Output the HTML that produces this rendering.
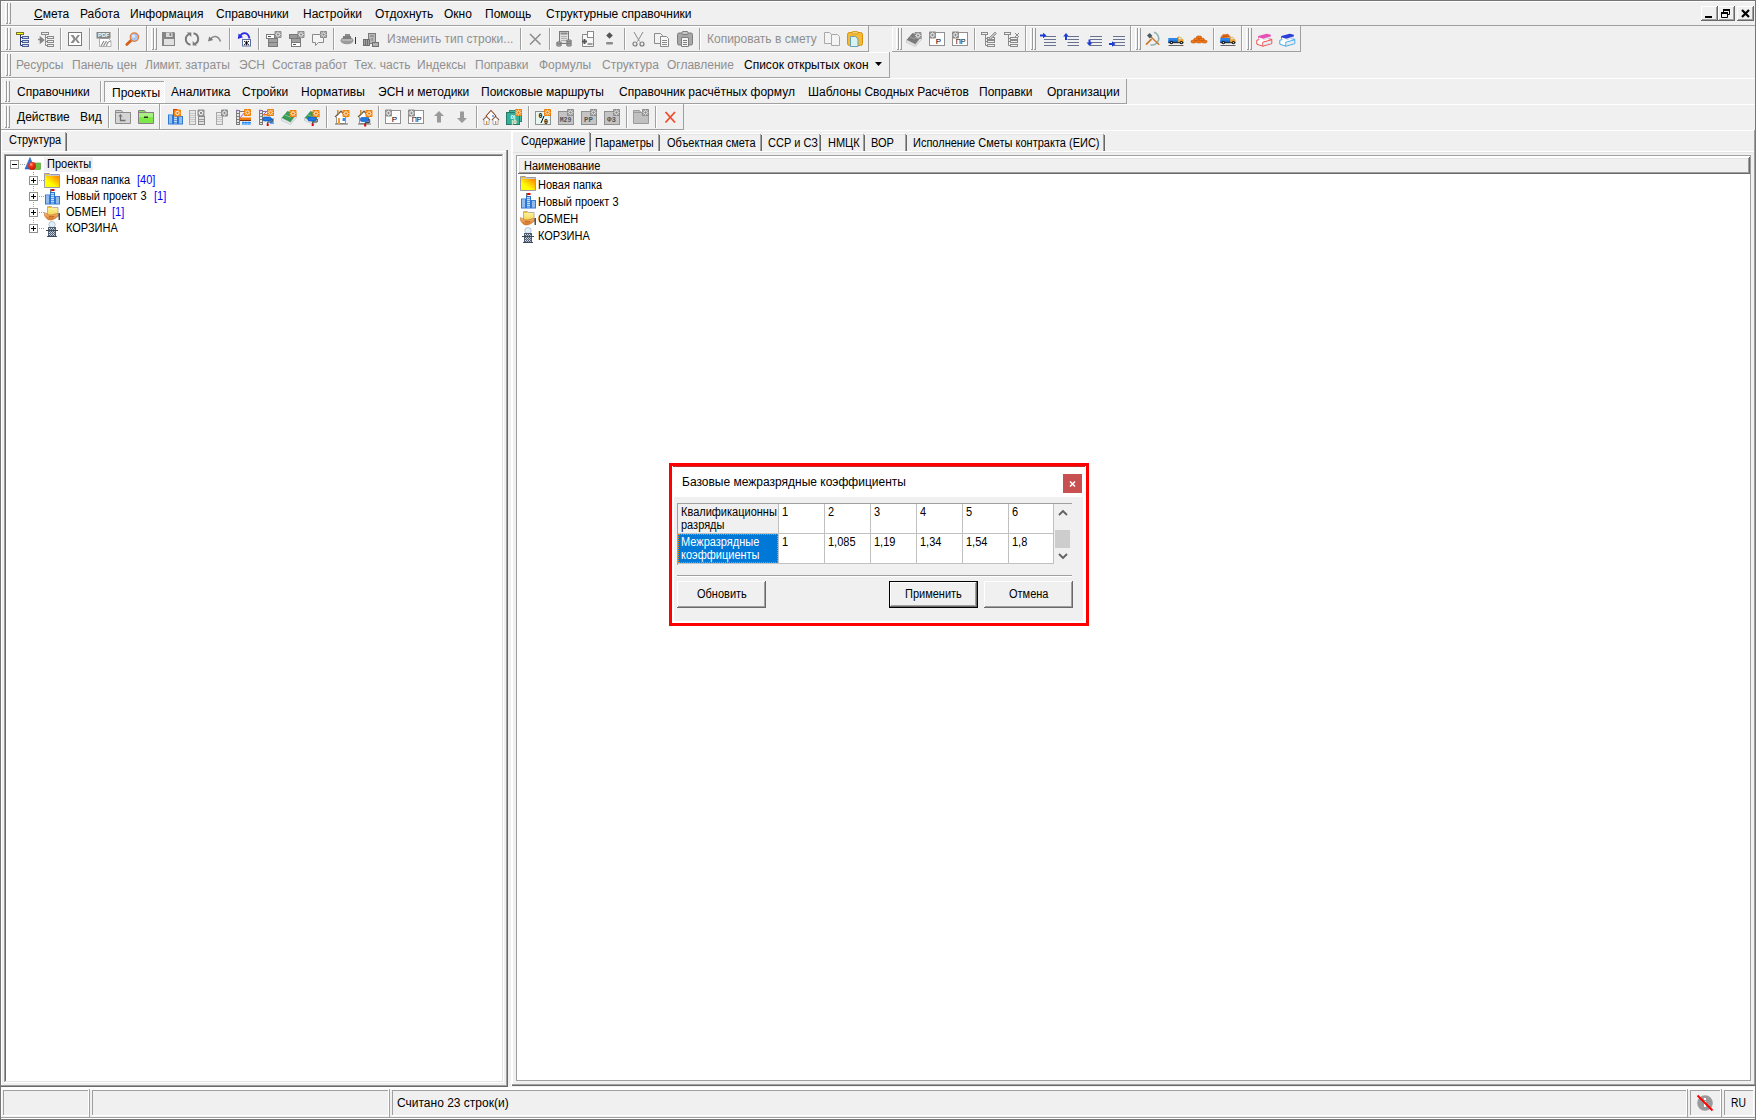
<!DOCTYPE html><html><head><meta charset="utf-8"><style>
*{margin:0;padding:0;box-sizing:border-box}
html,body{width:1756px;height:1120px;overflow:hidden;background:#f0f0f0}
body{position:relative;font-family:"Liberation Sans",sans-serif}
div,span,svg{position:absolute}
span{white-space:pre;line-height:15px}
.t{font-size:12px;transform:scaleX(0.917);transform-origin:0 0}
u{text-decoration:underline}
</style></head><body><div style="left:0px;top:0px;width:1756px;height:1120px;background:#f0f0f0;"></div><div style="left:0px;top:0px;width:1756px;height:1px;background:#767676;"></div><div style="left:0px;top:0px;width:1px;height:1120px;background:#767676;"></div><div style="left:1755px;top:0px;width:1px;height:1120px;background:#767676;"></div><div style="left:1px;top:1px;width:1754px;height:1px;background:#fff;"></div><div style="left:1px;top:1px;width:1px;height:1119px;background:#fff;"></div><div style="left:5px;top:3px;width:1px;height:21px;background:#fff;"></div><div style="left:7px;top:3px;width:1px;height:21px;background:#9a9a9a;"></div><div style="left:6px;top:23px;width:1px;height:1px;background:#9a9a9a;"></div><div style="left:8px;top:3px;width:1px;height:21px;background:#fff;"></div><div style="left:10px;top:3px;width:1px;height:21px;background:#9a9a9a;"></div><div style="left:9px;top:23px;width:1px;height:1px;background:#9a9a9a;"></div><div style="left:1px;top:25px;width:1754px;height:1px;background:#a0a0a0;"></div><span style="left:34px;top:7px;font-size:12px;color:#000;"><u>С</u>мета</span><span style="left:80px;top:7px;font-size:12px;color:#000;">Работа</span><span style="left:130px;top:7px;font-size:12px;color:#000;">Информация</span><span style="left:216px;top:7px;font-size:12px;color:#000;">Справочники</span><span style="left:303px;top:7px;font-size:12px;color:#000;">Настройки</span><span style="left:375px;top:7px;font-size:12px;color:#000;">Отдохнуть</span><span style="left:444px;top:7px;font-size:12px;color:#000;">Окно</span><span style="left:485px;top:7px;font-size:12px;color:#000;">Помощь</span><span style="left:546px;top:7px;font-size:12px;color:#000;">Структурные справочники</span><div style="left:1701px;top:6px;width:17px;height:15px;background:#f0f0f0;"></div><div style="left:1701px;top:6px;width:17px;height:1px;background:#fff;"></div><div style="left:1701px;top:6px;width:1px;height:15px;background:#fff;"></div><div style="left:1701px;top:20px;width:17px;height:1px;background:#696969;"></div><div style="left:1717px;top:6px;width:1px;height:15px;background:#696969;"></div><div style="left:1702px;top:19px;width:15px;height:1px;background:#a0a0a0;"></div><div style="left:1716px;top:7px;width:1px;height:13px;background:#a0a0a0;"></div><div style="left:1705px;top:16px;width:7px;height:2px;background:#000"></div><div style="left:1718px;top:6px;width:17px;height:15px;background:#f0f0f0;"></div><div style="left:1718px;top:6px;width:17px;height:1px;background:#fff;"></div><div style="left:1718px;top:6px;width:1px;height:15px;background:#fff;"></div><div style="left:1718px;top:20px;width:17px;height:1px;background:#696969;"></div><div style="left:1734px;top:6px;width:1px;height:15px;background:#696969;"></div><div style="left:1719px;top:19px;width:15px;height:1px;background:#a0a0a0;"></div><div style="left:1733px;top:7px;width:1px;height:13px;background:#a0a0a0;"></div><svg style="left:1721px;top:9px" width="10" height="10"><path d="M2.5 0.5h6v5h-6z" fill="#f0f0f0" stroke="#000" stroke-width="1"/><path d="M2 1h7" stroke="#000" stroke-width="2"/><path d="M0.5 3.5h6v5h-6z" fill="#f0f0f0" stroke="#000" stroke-width="1"/><path d="M0 4h7" stroke="#000" stroke-width="2"/></svg><div style="left:1737px;top:6px;width:17px;height:15px;background:#f0f0f0;"></div><div style="left:1737px;top:6px;width:17px;height:1px;background:#fff;"></div><div style="left:1737px;top:6px;width:1px;height:15px;background:#fff;"></div><div style="left:1737px;top:20px;width:17px;height:1px;background:#696969;"></div><div style="left:1753px;top:6px;width:1px;height:15px;background:#696969;"></div><div style="left:1738px;top:19px;width:15px;height:1px;background:#a0a0a0;"></div><div style="left:1752px;top:7px;width:1px;height:13px;background:#a0a0a0;"></div><svg style="left:1741px;top:9px" width="9" height="9"><path d="M1 1L8 8M8 1L1 8" stroke="#000" stroke-width="2.2"/></svg><div style="left:1px;top:26px;width:146px;height:1px;background:#fff;"></div><div style="left:1px;top:26px;width:1px;height:26px;background:#fff;"></div><div style="left:1px;top:51px;width:146px;height:1px;background:#a0a0a0;"></div><div style="left:146px;top:26px;width:1px;height:26px;background:#a0a0a0;"></div><div style="left:5px;top:28px;width:1px;height:22px;background:#fff;"></div><div style="left:7px;top:28px;width:1px;height:22px;background:#9a9a9a;"></div><div style="left:6px;top:49px;width:1px;height:1px;background:#9a9a9a;"></div><div style="left:8px;top:28px;width:1px;height:22px;background:#fff;"></div><div style="left:10px;top:28px;width:1px;height:22px;background:#9a9a9a;"></div><div style="left:9px;top:49px;width:1px;height:1px;background:#9a9a9a;"></div><div style="left:147px;top:26px;width:722px;height:1px;background:#fff;"></div><div style="left:147px;top:26px;width:1px;height:26px;background:#fff;"></div><div style="left:147px;top:51px;width:722px;height:1px;background:#a0a0a0;"></div><div style="left:868px;top:26px;width:1px;height:26px;background:#a0a0a0;"></div><div style="left:151px;top:28px;width:1px;height:22px;background:#fff;"></div><div style="left:153px;top:28px;width:1px;height:22px;background:#9a9a9a;"></div><div style="left:152px;top:49px;width:1px;height:1px;background:#9a9a9a;"></div><div style="left:154px;top:28px;width:1px;height:22px;background:#fff;"></div><div style="left:156px;top:28px;width:1px;height:22px;background:#9a9a9a;"></div><div style="left:155px;top:49px;width:1px;height:1px;background:#9a9a9a;"></div><div style="left:892px;top:26px;width:134px;height:1px;background:#fff;"></div><div style="left:892px;top:26px;width:1px;height:26px;background:#fff;"></div><div style="left:892px;top:51px;width:134px;height:1px;background:#a0a0a0;"></div><div style="left:1025px;top:26px;width:1px;height:26px;background:#a0a0a0;"></div><div style="left:896px;top:28px;width:1px;height:22px;background:#fff;"></div><div style="left:898px;top:28px;width:1px;height:22px;background:#9a9a9a;"></div><div style="left:897px;top:49px;width:1px;height:1px;background:#9a9a9a;"></div><div style="left:899px;top:28px;width:1px;height:22px;background:#fff;"></div><div style="left:901px;top:28px;width:1px;height:22px;background:#9a9a9a;"></div><div style="left:900px;top:49px;width:1px;height:1px;background:#9a9a9a;"></div><div style="left:1026px;top:26px;width:105px;height:1px;background:#fff;"></div><div style="left:1026px;top:26px;width:1px;height:26px;background:#fff;"></div><div style="left:1026px;top:51px;width:105px;height:1px;background:#a0a0a0;"></div><div style="left:1130px;top:26px;width:1px;height:26px;background:#a0a0a0;"></div><div style="left:1030px;top:28px;width:1px;height:22px;background:#fff;"></div><div style="left:1032px;top:28px;width:1px;height:22px;background:#9a9a9a;"></div><div style="left:1031px;top:49px;width:1px;height:1px;background:#9a9a9a;"></div><div style="left:1033px;top:28px;width:1px;height:22px;background:#fff;"></div><div style="left:1035px;top:28px;width:1px;height:22px;background:#9a9a9a;"></div><div style="left:1034px;top:49px;width:1px;height:1px;background:#9a9a9a;"></div><div style="left:1131px;top:26px;width:111px;height:1px;background:#fff;"></div><div style="left:1131px;top:26px;width:1px;height:26px;background:#fff;"></div><div style="left:1131px;top:51px;width:111px;height:1px;background:#a0a0a0;"></div><div style="left:1241px;top:26px;width:1px;height:26px;background:#a0a0a0;"></div><div style="left:1135px;top:28px;width:1px;height:22px;background:#fff;"></div><div style="left:1137px;top:28px;width:1px;height:22px;background:#9a9a9a;"></div><div style="left:1136px;top:49px;width:1px;height:1px;background:#9a9a9a;"></div><div style="left:1138px;top:28px;width:1px;height:22px;background:#fff;"></div><div style="left:1140px;top:28px;width:1px;height:22px;background:#9a9a9a;"></div><div style="left:1139px;top:49px;width:1px;height:1px;background:#9a9a9a;"></div><div style="left:1242px;top:26px;width:59px;height:1px;background:#fff;"></div><div style="left:1242px;top:26px;width:1px;height:26px;background:#fff;"></div><div style="left:1242px;top:51px;width:59px;height:1px;background:#a0a0a0;"></div><div style="left:1300px;top:26px;width:1px;height:26px;background:#a0a0a0;"></div><div style="left:1246px;top:28px;width:1px;height:22px;background:#fff;"></div><div style="left:1248px;top:28px;width:1px;height:22px;background:#9a9a9a;"></div><div style="left:1247px;top:49px;width:1px;height:1px;background:#9a9a9a;"></div><div style="left:1249px;top:28px;width:1px;height:22px;background:#fff;"></div><div style="left:1251px;top:28px;width:1px;height:22px;background:#9a9a9a;"></div><div style="left:1250px;top:49px;width:1px;height:1px;background:#9a9a9a;"></div><div style="left:60px;top:28px;width:1px;height:22px;background:#a0a0a0;"></div><div style="left:61px;top:28px;width:1px;height:22px;background:#fff;"></div><div style="left:89px;top:28px;width:1px;height:22px;background:#a0a0a0;"></div><div style="left:90px;top:28px;width:1px;height:22px;background:#fff;"></div><div style="left:118px;top:28px;width:1px;height:22px;background:#a0a0a0;"></div><div style="left:119px;top:28px;width:1px;height:22px;background:#fff;"></div><div style="left:229px;top:28px;width:1px;height:22px;background:#a0a0a0;"></div><div style="left:230px;top:28px;width:1px;height:22px;background:#fff;"></div><div style="left:258px;top:28px;width:1px;height:22px;background:#a0a0a0;"></div><div style="left:259px;top:28px;width:1px;height:22px;background:#fff;"></div><div style="left:333px;top:28px;width:1px;height:22px;background:#a0a0a0;"></div><div style="left:334px;top:28px;width:1px;height:22px;background:#fff;"></div><div style="left:520px;top:28px;width:1px;height:22px;background:#a0a0a0;"></div><div style="left:521px;top:28px;width:1px;height:22px;background:#fff;"></div><div style="left:549px;top:28px;width:1px;height:22px;background:#a0a0a0;"></div><div style="left:550px;top:28px;width:1px;height:22px;background:#fff;"></div><div style="left:624px;top:28px;width:1px;height:22px;background:#a0a0a0;"></div><div style="left:625px;top:28px;width:1px;height:22px;background:#fff;"></div><div style="left:699px;top:28px;width:1px;height:22px;background:#a0a0a0;"></div><div style="left:700px;top:28px;width:1px;height:22px;background:#fff;"></div><div style="left:974px;top:28px;width:1px;height:22px;background:#a0a0a0;"></div><div style="left:975px;top:28px;width:1px;height:22px;background:#fff;"></div><div style="left:1213px;top:28px;width:1px;height:22px;background:#a0a0a0;"></div><div style="left:1214px;top:28px;width:1px;height:22px;background:#fff;"></div><span style="left:387px;top:32px;font-size:12px;color:#8f8f8f;">Изменить тип строки...</span><span style="left:707px;top:32px;font-size:12px;color:#8f8f8f;">Копировать в смету</span><div style="left:1px;top:52px;width:889px;height:1px;background:#fff;"></div><div style="left:1px;top:52px;width:1px;height:26px;background:#fff;"></div><div style="left:1px;top:77px;width:889px;height:1px;background:#a0a0a0;"></div><div style="left:889px;top:52px;width:1px;height:26px;background:#a0a0a0;"></div><div style="left:5px;top:54px;width:1px;height:22px;background:#fff;"></div><div style="left:7px;top:54px;width:1px;height:22px;background:#9a9a9a;"></div><div style="left:6px;top:75px;width:1px;height:1px;background:#9a9a9a;"></div><div style="left:8px;top:54px;width:1px;height:22px;background:#fff;"></div><div style="left:10px;top:54px;width:1px;height:22px;background:#9a9a9a;"></div><div style="left:9px;top:75px;width:1px;height:1px;background:#9a9a9a;"></div><span style="left:16px;top:58px;font-size:12px;color:#8f8f8f;">Ресурсы</span><span style="left:72px;top:58px;font-size:12px;color:#8f8f8f;">Панель цен</span><span style="left:145px;top:58px;font-size:12px;color:#8f8f8f;">Лимит. затраты</span><span style="left:239px;top:58px;font-size:12px;color:#8f8f8f;">ЭСН</span><span style="left:272px;top:58px;font-size:12px;color:#8f8f8f;">Состав работ</span><span style="left:354px;top:58px;font-size:12px;color:#8f8f8f;">Тех. часть</span><span style="left:417px;top:58px;font-size:12px;color:#8f8f8f;">Индексы</span><span style="left:475px;top:58px;font-size:12px;color:#8f8f8f;">Поправки</span><span style="left:539px;top:58px;font-size:12px;color:#8f8f8f;">Формулы</span><span style="left:602px;top:58px;font-size:12px;color:#8f8f8f;">Структура</span><span style="left:667px;top:58px;font-size:12px;color:#8f8f8f;">Оглавление</span><span style="left:744px;top:58px;font-size:12px;color:#000;">Список открытых окон</span><svg style="left:875px;top:62px" width="8" height="5"><path d="M0 0H7L3.5 4Z" fill="#000"/></svg><div style="left:1px;top:78px;width:1754px;height:1px;background:#fff;"></div><div style="left:1px;top:103px;width:1126px;height:1px;background:#a0a0a0;"></div><div style="left:1126px;top:79px;width:1px;height:25px;background:#a0a0a0;"></div><div style="left:4px;top:81px;width:1px;height:21px;background:#fff;"></div><div style="left:6px;top:81px;width:1px;height:21px;background:#9a9a9a;"></div><div style="left:5px;top:101px;width:1px;height:1px;background:#9a9a9a;"></div><div style="left:7px;top:81px;width:1px;height:21px;background:#fff;"></div><div style="left:9px;top:81px;width:1px;height:21px;background:#9a9a9a;"></div><div style="left:8px;top:101px;width:1px;height:1px;background:#9a9a9a;"></div><div style="left:100px;top:81px;width:1px;height:21px;background:#a0a0a0;"></div><div style="left:101px;top:81px;width:1px;height:21px;background:#fff;"></div><div style="left:104px;top:81px;width:61px;height:21px;background-color:#f0f0f0;background-image:linear-gradient(45deg,#fff 25%,transparent 25%,transparent 75%,#fff 75%),linear-gradient(45deg,#fff 25%,transparent 25%,transparent 75%,#fff 75%);background-size:2px 2px;background-position:0 0,1px 1px"></div><div style="left:104px;top:81px;width:61px;height:1px;background:#a0a0a0;"></div><div style="left:104px;top:81px;width:1px;height:21px;background:#a0a0a0;"></div><div style="left:104px;top:102px;width:61px;height:1px;background:#fff;"></div><div style="left:164px;top:81px;width:1px;height:22px;background:#fff;"></div><span style="left:17px;top:85px;font-size:12px;color:#000;">Справочники</span><span style="left:112px;top:86px;font-size:12px;color:#000;">Проекты</span><span style="left:171px;top:85px;font-size:12px;color:#000;">Аналитика</span><span style="left:242px;top:85px;font-size:12px;color:#000;">Стройки</span><span style="left:301px;top:85px;font-size:12px;color:#000;">Нормативы</span><span style="left:378px;top:85px;font-size:12px;color:#000;">ЭСН и методики</span><span style="left:481px;top:85px;font-size:12px;color:#000;">Поисковые маршруты</span><span style="left:619px;top:85px;font-size:12px;color:#000;">Справочник расчётных формул</span><span style="left:808px;top:85px;font-size:12px;color:#000;">Шаблоны Сводных Расчётов</span><span style="left:979px;top:85px;font-size:12px;color:#000;">Поправки</span><span style="left:1047px;top:85px;font-size:12px;color:#000;">Организации</span><div style="left:1px;top:104px;width:1754px;height:1px;background:#fff;"></div><div style="left:1px;top:129px;width:683px;height:1px;background:#a0a0a0;"></div><div style="left:159px;top:104px;width:1px;height:26px;background:#a0a0a0;"></div><div style="left:160px;top:105px;width:1px;height:24px;background:#fff;"></div><div style="left:683px;top:104px;width:1px;height:26px;background:#a0a0a0;"></div><div style="left:4px;top:106px;width:1px;height:22px;background:#fff;"></div><div style="left:6px;top:106px;width:1px;height:22px;background:#9a9a9a;"></div><div style="left:5px;top:127px;width:1px;height:1px;background:#9a9a9a;"></div><div style="left:7px;top:106px;width:1px;height:22px;background:#fff;"></div><div style="left:9px;top:106px;width:1px;height:22px;background:#9a9a9a;"></div><div style="left:8px;top:127px;width:1px;height:1px;background:#9a9a9a;"></div><div style="left:108px;top:106px;width:1px;height:22px;background:#a0a0a0;"></div><div style="left:109px;top:106px;width:1px;height:22px;background:#fff;"></div><div style="left:326px;top:106px;width:1px;height:22px;background:#a0a0a0;"></div><div style="left:327px;top:106px;width:1px;height:22px;background:#fff;"></div><div style="left:378px;top:106px;width:1px;height:22px;background:#a0a0a0;"></div><div style="left:379px;top:106px;width:1px;height:22px;background:#fff;"></div><div style="left:476px;top:106px;width:1px;height:22px;background:#a0a0a0;"></div><div style="left:477px;top:106px;width:1px;height:22px;background:#fff;"></div><div style="left:528px;top:106px;width:1px;height:22px;background:#a0a0a0;"></div><div style="left:529px;top:106px;width:1px;height:22px;background:#fff;"></div><div style="left:626px;top:106px;width:1px;height:22px;background:#a0a0a0;"></div><div style="left:627px;top:106px;width:1px;height:22px;background:#fff;"></div><div style="left:655px;top:106px;width:1px;height:22px;background:#a0a0a0;"></div><div style="left:656px;top:106px;width:1px;height:22px;background:#fff;"></div><span style="left:17px;top:110px;font-size:12px;color:#000;">Действие</span><span style="left:80px;top:110px;font-size:12px;color:#000;">Вид</span><div style="left:1px;top:130px;width:1754px;height:1px;background:#fff;"></div><div style="left:2px;top:131px;width:64px;height:1px;background:#fff;"></div><div style="left:1px;top:132px;width:1px;height:20px;background:#fff;"></div><div style="left:65px;top:132px;width:1px;height:20px;background:#a0a0a0;"></div><div style="left:66px;top:133px;width:1px;height:19px;background:#696969;"></div><span class="t" style="left:9px;top:133px;color:#000;">Структура</span><div style="left:2px;top:151px;width:504px;height:1px;background:#fff;"></div><div style="left:1px;top:151px;width:1px;height:936px;background:#fff;"></div><div style="left:506px;top:150px;width:1px;height:936px;background:#a0a0a0;"></div><div style="left:507px;top:150px;width:1px;height:937px;background:#696969;"></div><div style="left:1px;top:1085px;width:506px;height:1px;background:#a0a0a0;"></div><div style="left:1px;top:1086px;width:507px;height:1px;background:#696969;"></div><div style="left:6px;top:156px;width:496px;height:925px;background:#fff;"></div><div style="left:4px;top:154px;width:500px;height:1px;background:#a0a0a0;"></div><div style="left:4px;top:154px;width:1px;height:929px;background:#a0a0a0;"></div><div style="left:5px;top:155px;width:498px;height:1px;background:#696969;"></div><div style="left:5px;top:155px;width:1px;height:927px;background:#696969;"></div><div style="left:4px;top:1082px;width:500px;height:1px;background:#fff;"></div><div style="left:503px;top:154px;width:1px;height:929px;background:#fff;"></div><div style="left:5px;top:1081px;width:498px;height:1px;background:#e3e3e3;"></div><div style="left:502px;top:155px;width:1px;height:927px;background:#e3e3e3;"></div><div style="left:511px;top:130px;width:1px;height:957px;background:#fff;"></div><div style="left:513px;top:131px;width:77px;height:1px;background:#fff;"></div><div style="left:512px;top:132px;width:1px;height:21px;background:#fff;"></div><div style="left:589px;top:132px;width:1px;height:21px;background:#a0a0a0;"></div><div style="left:590px;top:133px;width:1px;height:19px;background:#696969;"></div><span class="t" style="left:521px;top:134px;color:#000;">Содержание</span><div style="left:592px;top:133px;width:66px;height:1px;background:#fff;"></div><div style="left:592px;top:134px;width:66px;height:1px;background:#e3e3e3;"></div><div style="left:658px;top:134px;width:1px;height:18px;background:#a0a0a0;"></div><div style="left:659px;top:135px;width:1px;height:17px;background:#696969;"></div><span class="t" style="left:595px;top:136px;color:#000;">Параметры</span><div style="left:661px;top:133px;width:99px;height:1px;background:#fff;"></div><div style="left:661px;top:134px;width:99px;height:1px;background:#e3e3e3;"></div><div style="left:760px;top:134px;width:1px;height:18px;background:#a0a0a0;"></div><div style="left:761px;top:135px;width:1px;height:17px;background:#696969;"></div><span class="t" style="left:667px;top:136px;color:#000;">Объектная смета</span><div style="left:763px;top:133px;width:56px;height:1px;background:#fff;"></div><div style="left:763px;top:134px;width:56px;height:1px;background:#e3e3e3;"></div><div style="left:819px;top:134px;width:1px;height:18px;background:#a0a0a0;"></div><div style="left:820px;top:135px;width:1px;height:17px;background:#696969;"></div><span class="t" style="left:768px;top:136px;color:#000;">ССР и СЗ</span><div style="left:822px;top:133px;width:41px;height:1px;background:#fff;"></div><div style="left:822px;top:134px;width:41px;height:1px;background:#e3e3e3;"></div><div style="left:863px;top:134px;width:1px;height:18px;background:#a0a0a0;"></div><div style="left:864px;top:135px;width:1px;height:17px;background:#696969;"></div><span class="t" style="left:828px;top:136px;color:#000;">НМЦК</span><div style="left:866px;top:133px;width:39px;height:1px;background:#fff;"></div><div style="left:866px;top:134px;width:39px;height:1px;background:#e3e3e3;"></div><div style="left:905px;top:134px;width:1px;height:18px;background:#a0a0a0;"></div><div style="left:906px;top:135px;width:1px;height:17px;background:#696969;"></div><span class="t" style="left:871px;top:136px;color:#000;">ВОР</span><div style="left:908px;top:133px;width:195px;height:1px;background:#fff;"></div><div style="left:908px;top:134px;width:195px;height:1px;background:#e3e3e3;"></div><div style="left:1103px;top:134px;width:1px;height:18px;background:#a0a0a0;"></div><div style="left:1104px;top:135px;width:1px;height:17px;background:#696969;"></div><span class="t" style="left:913px;top:136px;color:#000;">Исполнение Сметы контракта (ЕИС)</span><div style="left:590px;top:151px;width:1164px;height:1px;background:#fff;"></div><div style="left:512px;top:152px;width:1241px;height:1px;background:#e3e3e3;"></div><div style="left:512px;top:130px;width:1px;height:956px;background:#fff;"></div><div style="left:1754px;top:130px;width:1px;height:956px;background:#a0a0a0;"></div><div style="left:512px;top:1084px;width:1243px;height:1px;background:#a0a0a0;"></div><div style="left:512px;top:1085px;width:1243px;height:1px;background:#696969;"></div><div style="left:516px;top:155px;width:1235px;height:926px;background:#fff;border:1px solid #a0a0a0"></div><div style="left:519px;top:158px;width:1230px;height:15px;background:#f0f0f0;"></div><div style="left:518px;top:157px;width:1232px;height:1px;background:#fff;"></div><div style="left:518px;top:157px;width:1px;height:17px;background:#fff;"></div><div style="left:519px;top:158px;width:1230px;height:1px;background:#e3e3e3;"></div><div style="left:519px;top:158px;width:1px;height:15px;background:#e3e3e3;"></div><div style="left:518px;top:173px;width:1232px;height:1px;background:#696969;"></div><div style="left:1749px;top:157px;width:1px;height:17px;background:#696969;"></div><div style="left:519px;top:172px;width:1230px;height:1px;background:#a0a0a0;"></div><div style="left:1748px;top:158px;width:1px;height:15px;background:#a0a0a0;"></div><span class="t" style="left:524px;top:159px;color:#000;">Наименование</span><span class="t" style="left:538px;top:178px;color:#000;">Новая папка</span><span class="t" style="left:538px;top:195px;color:#000;">Новый проект 3</span><span class="t" style="left:538px;top:212px;color:#000;">ОБМЕН</span><span class="t" style="left:538px;top:229px;color:#000;">КОРЗИНА</span><div style="left:10px;top:160px;width:9px;height:9px;background:#fff;border:1px solid #919191"></div><div style="left:12px;top:164px;width:5px;height:1px;background:#000;"></div><div style="left:20px;top:164px;width:5px;height:1px;background-image:linear-gradient(90deg,#a0a0a0 50%,transparent 50%);background-size:2px 1px"></div><div style="left:44px;top:157px;width:49px;height:15px;background:#f0f0f0;"></div><span class="t" style="left:47px;top:157px;color:#000;">Проекты</span><div style="left:33px;top:172px;width:1px;height:56px;background-image:linear-gradient(180deg,#a0a0a0 50%,transparent 50%);background-size:1px 2px"></div><div style="left:29px;top:176px;width:9px;height:9px;background:#fff;border:1px solid #919191"></div><div style="left:31px;top:180px;width:5px;height:1px;background:#000;"></div><div style="left:33px;top:178px;width:1px;height:5px;background:#000;"></div><div style="left:39px;top:180px;width:5px;height:1px;background-image:linear-gradient(90deg,#a0a0a0 50%,transparent 50%);background-size:2px 1px"></div><span class="t" style="left:66px;top:173px;color:#000;">Новая папка</span><span class="t" style="left:137px;top:173px;color:#0000ff;">[40]</span><div style="left:29px;top:192px;width:9px;height:9px;background:#fff;border:1px solid #919191"></div><div style="left:31px;top:196px;width:5px;height:1px;background:#000;"></div><div style="left:33px;top:194px;width:1px;height:5px;background:#000;"></div><div style="left:39px;top:196px;width:5px;height:1px;background-image:linear-gradient(90deg,#a0a0a0 50%,transparent 50%);background-size:2px 1px"></div><span class="t" style="left:66px;top:189px;color:#000;">Новый проект 3</span><span class="t" style="left:154px;top:189px;color:#0000ff;">[1]</span><div style="left:29px;top:208px;width:9px;height:9px;background:#fff;border:1px solid #919191"></div><div style="left:31px;top:212px;width:5px;height:1px;background:#000;"></div><div style="left:33px;top:210px;width:1px;height:5px;background:#000;"></div><div style="left:39px;top:212px;width:5px;height:1px;background-image:linear-gradient(90deg,#a0a0a0 50%,transparent 50%);background-size:2px 1px"></div><span class="t" style="left:66px;top:205px;color:#000;">ОБМЕН</span><span class="t" style="left:112px;top:205px;color:#0000ff;">[1]</span><div style="left:29px;top:224px;width:9px;height:9px;background:#fff;border:1px solid #919191"></div><div style="left:31px;top:228px;width:5px;height:1px;background:#000;"></div><div style="left:33px;top:226px;width:1px;height:5px;background:#000;"></div><div style="left:39px;top:228px;width:5px;height:1px;background-image:linear-gradient(90deg,#a0a0a0 50%,transparent 50%);background-size:2px 1px"></div><span class="t" style="left:66px;top:221px;color:#000;">КОРЗИНА</span><div style="left:1px;top:1087px;width:1754px;height:3px;background:#fff;"></div><div style="left:3px;top:1090px;width:86px;height:1px;background:#a0a0a0;"></div><div style="left:3px;top:1090px;width:1px;height:26px;background:#a0a0a0;"></div><div style="left:3px;top:1115px;width:86px;height:1px;background:#fff;"></div><div style="left:88px;top:1090px;width:1px;height:26px;background:#fff;"></div><div style="left:89px;top:1089px;width:1px;height:28px;background:#a0a0a0;"></div><div style="left:92px;top:1090px;width:297px;height:1px;background:#a0a0a0;"></div><div style="left:92px;top:1090px;width:1px;height:26px;background:#a0a0a0;"></div><div style="left:92px;top:1115px;width:297px;height:1px;background:#fff;"></div><div style="left:388px;top:1090px;width:1px;height:26px;background:#fff;"></div><div style="left:389px;top:1089px;width:1px;height:28px;background:#a0a0a0;"></div><div style="left:392px;top:1090px;width:1295px;height:1px;background:#a0a0a0;"></div><div style="left:392px;top:1090px;width:1px;height:26px;background:#a0a0a0;"></div><div style="left:392px;top:1115px;width:1295px;height:1px;background:#fff;"></div><div style="left:1686px;top:1090px;width:1px;height:26px;background:#fff;"></div><div style="left:1687px;top:1089px;width:1px;height:28px;background:#a0a0a0;"></div><div style="left:1690px;top:1090px;width:31px;height:1px;background:#a0a0a0;"></div><div style="left:1690px;top:1090px;width:1px;height:26px;background:#a0a0a0;"></div><div style="left:1690px;top:1115px;width:31px;height:1px;background:#fff;"></div><div style="left:1720px;top:1090px;width:1px;height:26px;background:#fff;"></div><div style="left:1721px;top:1089px;width:1px;height:28px;background:#a0a0a0;"></div><div style="left:1724px;top:1090px;width:30px;height:1px;background:#a0a0a0;"></div><div style="left:1724px;top:1090px;width:1px;height:26px;background:#a0a0a0;"></div><div style="left:1724px;top:1115px;width:30px;height:1px;background:#fff;"></div><div style="left:1753px;top:1090px;width:1px;height:26px;background:#fff;"></div><div style="left:1px;top:1117px;width:1754px;height:1px;background:#a0a0a0;"></div><div style="left:1px;top:1118px;width:1754px;height:1px;background:#fff;"></div><div style="left:0px;top:1119px;width:1756px;height:1px;background:#767676;"></div><span style="left:397px;top:1096px;font-size:12px;color:#000;">Считано 23 строк(и)</span><span style="left:1731px;top:1096px;font-size:12px;color:#000;transform:scaleX(0.86);transform-origin:0 0">RU</span><svg style="left:1696px;top:1094px" width="18" height="18"><circle cx="9" cy="9" r="7.8" fill="#9a9a9a"/><rect x="8" y="4" width="2" height="2" fill="#fff"/><rect x="8" y="7" width="2" height="6" fill="#fff"/><path d="M1.5 1.5L16.5 16.5" stroke="#f00" stroke-width="2"/></svg><div style="left:669px;top:463px;width:420px;height:163px;background:#fff;border:3.5px solid #f00"></div><div style="left:673px;top:466px;width:412px;height:1px;background:#c42a2a;"></div><div style="left:674px;top:497px;width:409px;height:124px;background:#f0f0f0;"></div><span style="left:682px;top:475px;font-size:12px;color:#000;">Базовые межразрядные коэффициенты</span><div style="left:1063px;top:474px;width:19px;height:19px;background:#c75050;"></div><svg style="left:1067px;top:478px" width="11" height="11"><path d="M3 3.5L8 8.5M8 3.5L3 8.5" stroke="#fff" stroke-width="1.6"/></svg><div style="left:678px;top:504px;width:376px;height:60px;background:#fff;"></div><div style="left:677px;top:503px;width:395px;height:1px;background:#a0a0a0;"></div><div style="left:677px;top:503px;width:1px;height:62px;background:#a0a0a0;"></div><div style="left:678px;top:504px;width:100px;height:29px;background:#f0f0f0;"></div><div style="left:778px;top:504px;width:1px;height:60px;background:#c0c0c0;"></div><div style="left:824px;top:504px;width:1px;height:60px;background:#c0c0c0;"></div><div style="left:870px;top:504px;width:1px;height:60px;background:#c0c0c0;"></div><div style="left:916px;top:504px;width:1px;height:60px;background:#c0c0c0;"></div><div style="left:962px;top:504px;width:1px;height:60px;background:#c0c0c0;"></div><div style="left:1008px;top:504px;width:1px;height:60px;background:#c0c0c0;"></div><div style="left:1053px;top:504px;width:1px;height:60px;background:#c0c0c0;"></div><div style="left:678px;top:533px;width:376px;height:1px;background:#c0c0c0;"></div><div style="left:678px;top:563px;width:376px;height:1px;background:#c0c0c0;"></div><div style="left:678px;top:534px;width:100px;height:29px;background:#0078d7;outline:1px dotted #ff8c00;outline-offset:-1px"></div><span class="t" style="left:681px;top:505px;color:#000;">Квалификационны</span><span class="t" style="left:681px;top:518px;color:#000;">разряды</span><span class="t" style="left:681px;top:535px;color:#fff;">Межразрядные</span><span class="t" style="left:681px;top:548px;color:#fff;">коэффициенты</span><span class="t" style="left:782px;top:505px;color:#000;">1</span><span class="t" style="left:782px;top:535px;color:#000;">1</span><span class="t" style="left:828px;top:505px;color:#000;">2</span><span class="t" style="left:828px;top:535px;color:#000;">1,085</span><span class="t" style="left:874px;top:505px;color:#000;">3</span><span class="t" style="left:874px;top:535px;color:#000;">1,19</span><span class="t" style="left:920px;top:505px;color:#000;">4</span><span class="t" style="left:920px;top:535px;color:#000;">1,34</span><span class="t" style="left:966px;top:505px;color:#000;">5</span><span class="t" style="left:966px;top:535px;color:#000;">1,54</span><span class="t" style="left:1012px;top:505px;color:#000;">6</span><span class="t" style="left:1012px;top:535px;color:#000;">1,8</span><div style="left:1054px;top:504px;width:17px;height:61px;background:#f0f0f0;"></div><div style="left:1055px;top:530px;width:15px;height:18px;background:#cdcdcd;"></div><svg style="left:1058px;top:509px" width="10" height="8"><path d="M1 6L5 2L9 6" fill="none" stroke="#606060" stroke-width="1.8"/></svg><svg style="left:1058px;top:552px" width="10" height="8"><path d="M1 2L5 6L9 2" fill="none" stroke="#606060" stroke-width="1.8"/></svg><div style="left:677px;top:575px;width:395px;height:1px;background:#a0a0a0;"></div><div style="left:677px;top:576px;width:395px;height:1px;background:#fff;"></div><div style="left:677px;top:581px;width:89px;height:27px;background:#f0f0f0;"></div><div style="left:677px;top:581px;width:89px;height:1px;background:#fff;"></div><div style="left:677px;top:581px;width:1px;height:27px;background:#fff;"></div><div style="left:677px;top:607px;width:89px;height:1px;background:#696969;"></div><div style="left:765px;top:581px;width:1px;height:27px;background:#696969;"></div><div style="left:678px;top:606px;width:87px;height:1px;background:#a0a0a0;"></div><div style="left:764px;top:582px;width:1px;height:25px;background:#a0a0a0;"></div><div style="left:889px;top:581px;width:89px;height:27px;background:#f0f0f0;"></div><div style="left:889px;top:581px;width:89px;height:27px;border:1px solid #000"></div><div style="left:890px;top:582px;width:87px;height:1px;background:#fff;"></div><div style="left:890px;top:582px;width:1px;height:25px;background:#fff;"></div><div style="left:890px;top:606px;width:87px;height:1px;background:#696969;"></div><div style="left:976px;top:582px;width:1px;height:25px;background:#696969;"></div><div style="left:891px;top:605px;width:85px;height:1px;background:#a0a0a0;"></div><div style="left:975px;top:583px;width:1px;height:23px;background:#a0a0a0;"></div><div style="left:984px;top:581px;width:89px;height:27px;background:#f0f0f0;"></div><div style="left:984px;top:581px;width:89px;height:1px;background:#fff;"></div><div style="left:984px;top:581px;width:1px;height:27px;background:#fff;"></div><div style="left:984px;top:607px;width:89px;height:1px;background:#696969;"></div><div style="left:1072px;top:581px;width:1px;height:27px;background:#696969;"></div><div style="left:985px;top:606px;width:87px;height:1px;background:#a0a0a0;"></div><div style="left:1071px;top:582px;width:1px;height:25px;background:#a0a0a0;"></div><span class="t" style="left:697px;top:587px;color:#000;">Обновить</span><span class="t" style="left:905px;top:587px;color:#000;">Применить</span><span class="t" style="left:1009px;top:587px;color:#000;">Отмена</span><svg style="left:15px;top:31px;overflow:visible" width="16" height="16" viewBox="0 0 16 16"><rect x="1.5" y="1.5" width="7" height="2" fill="#ffff00" stroke="#77772a"/><path d="M5.5 4v10.5M5.5 6.5h2M5.5 10.5h2M5.5 14.5h2" stroke="#2a3a6a" stroke-width="1"/><rect x="7.5" y="5.5" width="6" height="2" fill="#bfe0ff" stroke="#4d5f95"/><rect x="7.5" y="9.5" width="6" height="2" fill="#bfe0ff" stroke="#4d5f95"/><rect x="7.5" y="13.5" width="6" height="2" fill="#bfe0ff" stroke="#4d5f95"/></svg><svg style="left:38px;top:31px;overflow:visible" width="16" height="16" viewBox="0 0 16 16"><rect x="3.5" y="1.5" width="7" height="2" fill="#f0f0f0" stroke="#8a8a8a"/><path d="M7.5 4v10.5M7.5 6.5h2M7.5 10.5h2M7.5 14.5h2" stroke="#8a8a8a"/><rect x="9.5" y="5.5" width="6" height="2" fill="#f0f0f0" stroke="#8a8a8a"/><rect x="9.5" y="9.5" width="6" height="2" fill="#f0f0f0" stroke="#8a8a8a"/><rect x="9.5" y="13.5" width="6" height="2" fill="#f0f0f0" stroke="#8a8a8a"/><path d="M0 8.5h3M2.5 6.5l3 2.5l-3 2.5z" stroke="#858585" stroke-width="1.6" fill="#858585"/></svg><svg style="left:67px;top:31px;overflow:visible" width="16" height="16" viewBox="0 0 16 16"><rect x="1.5" y="1.5" width="13" height="13" fill="#fff" stroke="#7a7a7a"/><path d="M3.5 4h3l2 3l2-3h2.5l-3 4l3 4h-2.5l-2-3l-2 3h-3l3-4z" fill="#8c8c8c"/></svg><svg style="left:96px;top:31px;overflow:visible" width="16" height="16" viewBox="0 0 16 16"><path d="M3.5 7.5h9l2.5 2.5v5.5h-11.5z" fill="#fff" stroke="#b0b0b0"/><path d="M5 15l3-5M7.5 15l3-5M10.5 15c0.5-3 2-4.5 4-5" stroke="#8a8a8a" stroke-width="1.2" fill="none"/><rect x="0.5" y="1" width="14" height="6.5" fill="#858585"/><text x="7.5" y="6.4" font-size="5.6" font-weight="bold" fill="#fff" text-anchor="middle" font-family="Liberation Sans">PDF</text></svg><svg style="left:125px;top:31px;overflow:visible" width="16" height="16" viewBox="0 0 16 16"><path d="M1.8 13.6L6.2 9.2" stroke="#d2601a" stroke-width="2.8" stroke-linecap="round"/><circle cx="9.4" cy="6.1" r="4.2" fill="#a8c4f2" stroke="#e07a3a" stroke-width="1.2"/><circle cx="8.6" cy="5.2" r="1.6" fill="#d8e8ff"/></svg><svg style="left:161px;top:31px;overflow:visible" width="16" height="16" viewBox="0 0 16 16"><path d="M1 1h12l1 1v13h-13z" fill="#858585"/><rect x="5" y="1.5" width="6.5" height="4.5" fill="#d8d8d8"/><rect x="8.6" y="2.2" width="1.6" height="2.6" fill="#777"/><rect x="3" y="8" width="10" height="6" fill="#e0e0e0"/></svg><svg style="left:184px;top:31px;overflow:visible" width="16" height="16" viewBox="0 0 16 16"><path d="M5.2 3.2A5.5 5.5 0 0 0 6.5 13.7" fill="none" stroke="#7a7a7a" stroke-width="2"/><path d="M10.8 12.8A5.5 5.5 0 0 0 9.5 2.3" fill="none" stroke="#7a7a7a" stroke-width="2"/><path d="M2.8 1.5h4.5v4.5z" fill="#7a7a7a"/><path d="M13.2 14.5h-4.5v-4.5z" fill="#7a7a7a"/></svg><svg style="left:207px;top:31px;overflow:visible" width="16" height="16" viewBox="0 0 16 16"><path d="M3.5 8.2C6 4.5 11 4 13.5 10.5" fill="none" stroke="#8a8a8a" stroke-width="1.6"/><path d="M1 10.5l1.2-5l4 3.5z" fill="#7a7a7a"/></svg><svg style="left:237px;top:31px;overflow:visible" width="16" height="16" viewBox="0 0 16 16"><path d="M3 5.5C5 1 11 0.5 12.5 7.5" fill="none" stroke="#2c2ce0" stroke-width="1.8"/><path d="M0.8 8l0.8-5.5l4.5 3.8z" fill="#2c2ce0"/><rect x="5.5" y="8.5" width="8" height="6.5" fill="#fff" stroke="#5b6ba5"/><path d="M7 10l5 4M12 10l-5 4M9.5 9.8v4.5" stroke="#000" stroke-width="0.9"/></svg><svg style="left:266px;top:31px;overflow:visible" width="16" height="16" viewBox="0 0 16 16"><rect x="0.5" y="3.5" width="8" height="4" fill="#fff" stroke="#7a7a7a"/><path d="M2 5.5h3" stroke="#555"/><rect x="2.5" y="7.5" width="9" height="8" fill="#a0a0a0" stroke="#7a7a7a"/><path d="M3 11.5h8" stroke="#7a7a7a"/><rect x="8.5" y="0" width="7" height="7" rx="1" fill="#8a8a8a"/><circle cx="12.0" cy="3.5" r="1.68" fill="none" stroke="#fff" stroke-width="0.85"/><path d="M12.0 0.6V1.4M12.0 5.6V6.4M9.1 3.5H9.9M14.1 3.5H14.9M9.8 1.3l0.8 0.8M14.2 1.3l-0.8 0.8M9.8 5.7l0.8 -0.8M14.2 5.7l-0.8 -0.8" stroke="#fff" stroke-width="0.6"/></svg><svg style="left:289px;top:31px;overflow:visible" width="16" height="16" viewBox="0 0 16 16"><rect x="0.5" y="3.5" width="8" height="4" fill="#999" stroke="#7a7a7a"/><rect x="2.5" y="7.5" width="9" height="4" fill="#a0a0a0" stroke="#7a7a7a"/><rect x="2.5" y="11.5" width="9" height="4" fill="#fff" stroke="#7a7a7a"/><path d="M4 13.5h3" stroke="#555"/><rect x="8.5" y="0" width="7" height="7" rx="1" fill="#8a8a8a"/><circle cx="12.0" cy="3.5" r="1.68" fill="none" stroke="#fff" stroke-width="0.85"/><path d="M12.0 0.6V1.4M12.0 5.6V6.4M9.1 3.5H9.9M14.1 3.5H14.9M9.8 1.3l0.8 0.8M14.2 1.3l-0.8 0.8M9.8 5.7l0.8 -0.8M14.2 5.7l-0.8 -0.8" stroke="#fff" stroke-width="0.6"/></svg><svg style="left:311px;top:31px;overflow:visible" width="16" height="16" viewBox="0 0 16 16"><path d="M1.5 3.5h11v8h-5l-3 3v-3h-3z" fill="#f4f4f4" stroke="#8a8a8a" stroke-linejoin="round"/><rect x="9" y="0" width="7" height="7" rx="1" fill="#8a8a8a"/><circle cx="12.5" cy="3.5" r="1.68" fill="none" stroke="#fff" stroke-width="0.85"/><path d="M12.5 0.6V1.4M12.5 5.6V6.4M9.6 3.5H10.4M14.6 3.5H15.4M10.3 1.3l0.8 0.8M14.7 1.3l-0.8 0.8M10.3 5.7l0.8 -0.8M14.7 5.7l-0.8 -0.8" stroke="#fff" stroke-width="0.6"/></svg><svg style="left:340px;top:31px;overflow:visible" width="16" height="16" viewBox="0 0 16 16"><ellipse cx="7" cy="9.5" rx="6.5" ry="3.8" fill="#9a9a9a"/><rect x="3" y="5" width="8" height="3" fill="#7f7f7f"/><rect x="5" y="3" width="5" height="2" fill="#8a8a8a"/><path d="M2 9h10" stroke="#d0d0d0"/><path d="M15.5 6v7" stroke="#333" stroke-width="1"/></svg><svg style="left:363px;top:31px;overflow:visible" width="16" height="16" viewBox="0 0 16 16"><rect x="5.5" y="2.5" width="7" height="10" fill="#b8b8b8" stroke="#7a7a7a"/><path d="M7 5h4M9 7v3" stroke="#7a7a7a"/><rect x="0.5" y="8.5" width="6" height="6" fill="#a0a0a0" stroke="#6f6f6f"/><path d="M2.5 9v5M4.5 9v5" stroke="#6f6f6f"/><rect x="9.5" y="11.5" width="6" height="4" fill="#b0b0b0" stroke="#6f6f6f"/></svg><svg style="left:527px;top:31px;overflow:visible" width="16" height="16" viewBox="0 0 16 16"><path d="M3 3L13.5 13.5M13.5 3L3 13.5" stroke="#8c8c8c" stroke-width="1.5"/></svg><svg style="left:556px;top:31px;overflow:visible" width="16" height="16" viewBox="0 0 16 16"><rect x="3.5" y="0.5" width="9" height="12" fill="#e0e0e0" stroke="#7a7a7a"/><rect x="4.5" y="1.5" width="7" height="2" fill="#8a8a8a"/><path d="M5 5.5h6M5 7.5h6M5 9.5h6" stroke="#b0b0b0"/><ellipse cx="3" cy="12" rx="2.6" ry="1.2" fill="#aaa" stroke="#6f6f6f" stroke-width="0.8"/><ellipse cx="3" cy="14" rx="2.6" ry="1.2" fill="#aaa" stroke="#6f6f6f" stroke-width="0.8"/><ellipse cx="13" cy="10" rx="2.6" ry="1.2" fill="#aaa" stroke="#6f6f6f" stroke-width="0.8"/><ellipse cx="13" cy="12" rx="2.6" ry="1.2" fill="#aaa" stroke="#6f6f6f" stroke-width="0.8"/><ellipse cx="13" cy="14" rx="2.6" ry="1.2" fill="#aaa" stroke="#6f6f6f" stroke-width="0.8"/></svg><svg style="left:579px;top:31px;overflow:visible" width="16" height="16" viewBox="0 0 16 16"><path d="M3.5 3.5h5v-3h6v15h-11z" fill="#f6f6f6" stroke="#8a8a8a"/><rect x="8.5" y="0.5" width="6" height="6" fill="#fff" stroke="#8a8a8a"/><path d="M3 10.5h5M5.5 8v5" stroke="#555" stroke-width="1.8"/><path d="M8.5 13h5" stroke="#777" stroke-width="1.4"/></svg><svg style="left:602px;top:31px;overflow:visible" width="16" height="16" viewBox="0 0 16 16"><path d="M7.5 1.2l3.3 3.3l-3.3 3.3l-3.3-3.3z" fill="#555"/><rect x="4" y="11" width="7" height="2.5" rx="1" fill="#8c8c8c"/></svg><svg style="left:630px;top:31px;overflow:visible" width="16" height="16" viewBox="0 0 16 16"><path d="M4 1l5.5 9.5M13 1l-5.5 9.5" stroke="#8a8a8a" stroke-width="1"/><circle cx="5" cy="13" r="2" fill="none" stroke="#7a7a7a" stroke-width="1.2"/><circle cx="12" cy="13" r="2" fill="none" stroke="#7a7a7a" stroke-width="1.2"/></svg><svg style="left:654px;top:31px;overflow:visible" width="16" height="16" viewBox="0 0 16 16"><path d="M0.5 2.5h6l2 2v8h-8z" fill="#f2f2f2" stroke="#8a8a8a"/><path d="M6.5 5.5h6l2 2v8h-8z" fill="#f8f8f8" stroke="#8a8a8a"/><path d="M8 9.5h5M8 11.5h5M8 13.5h5" stroke="#8a8a8a"/></svg><svg style="left:677px;top:31px;overflow:visible" width="16" height="16" viewBox="0 0 16 16"><rect x="0.5" y="2" width="15" height="12" rx="1.5" fill="#a8a8a8" stroke="#7f7f7f"/><rect x="5" y="0.5" width="6" height="3" rx="1" fill="#c8c8c8" stroke="#7f7f7f"/><path d="M4.5 6.5h7v9h-7z" fill="#f4f4f4" stroke="#7f7f7f"/><path d="M6 9.5h4M6 11.5h4M6 13.5h4" stroke="#7f7f7f"/></svg><svg style="left:824px;top:31px;overflow:visible" width="16" height="16" viewBox="0 0 16 16"><path d="M0.5 1.5h5l2 2v9h-7z" fill="#f4f4f4" stroke="#a8a8a8"/><path d="M7.5 3.5h6l2 2v9h-8z" fill="#f4f4f4" stroke="#a8a8a8"/></svg><svg style="left:847px;top:31px;overflow:visible" width="16" height="16" viewBox="0 0 16 16"><rect x="0.5" y="1.5" width="15" height="13" rx="2" fill="#f5b935" stroke="#d8900a"/><rect x="5" y="0.5" width="6" height="2.5" rx="1" fill="#f8d070" stroke="#d8a020"/><path d="M3.5 5.5h5l2.5 2.5v7.5h-7.5z" fill="#d6f2f2" stroke="#6aa0b0"/></svg><svg style="left:906px;top:31px;overflow:visible" width="16" height="16" viewBox="0 0 16 16"><path d="M0.5 9l6-7l9 3.5l-6 8z" fill="#7a7a7a"/><path d="M0.5 9l9 4.5l6-8v3l-6 7l-9-4z" fill="#e4e4e4" stroke="#b8b8b8" stroke-width="0.6"/><path d="M4 6l5 2" stroke="#b0b0b0" stroke-width="0.8"/><rect x="8.5" y="1" width="7" height="7" rx="1" fill="#8a8a8a"/><circle cx="12.0" cy="4.5" r="1.68" fill="none" stroke="#fff" stroke-width="0.85"/><path d="M12.0 1.6V2.4M12.0 6.6V7.4M9.1 4.5H9.9M14.1 4.5H14.9M9.8 2.3l0.8 0.8M14.2 2.3l-0.8 0.8M9.8 6.7l0.8 -0.8M14.2 6.7l-0.8 -0.8" stroke="#fff" stroke-width="0.6"/></svg><svg style="left:929px;top:31px;overflow:visible" width="16" height="16" viewBox="0 0 16 16"><rect x="0.5" y="1.5" width="15" height="13" fill="#fff" stroke="#909090"/><rect x="0" y="0.5" width="7" height="7" rx="1" fill="#8a8a8a"/><circle cx="3.5" cy="4.0" r="1.68" fill="none" stroke="#fff" stroke-width="0.85"/><path d="M3.5 1.1V1.9M3.5 6.1V6.9M0.6 4.0H1.4M5.6 4.0H6.4M1.3 1.8l0.8 0.8M5.7 1.8l-0.8 0.8M1.3 6.2l0.8 -0.8M5.7 6.2l-0.8 -0.8" stroke="#fff" stroke-width="0.6"/><text x="9.5" y="13" font-size="8" fill="#000" text-anchor="middle" font-family="Liberation Sans">P</text></svg><svg style="left:952px;top:31px;overflow:visible" width="16" height="16" viewBox="0 0 16 16"><rect x="0.5" y="1.5" width="15" height="13" fill="#fff" stroke="#909090"/><rect x="0" y="0.5" width="7" height="7" rx="1" fill="#8a8a8a"/><circle cx="3.5" cy="4.0" r="1.68" fill="none" stroke="#fff" stroke-width="0.85"/><path d="M3.5 1.1V1.9M3.5 6.1V6.9M0.6 4.0H1.4M5.6 4.0H6.4M1.3 1.8l0.8 0.8M5.7 1.8l-0.8 0.8M1.3 6.2l0.8 -0.8M5.7 6.2l-0.8 -0.8" stroke="#fff" stroke-width="0.6"/><text x="8.7" y="13" font-size="7.2" fill="#000" text-anchor="middle" font-family="Liberation Sans">ПР</text></svg><svg style="left:981px;top:31px;overflow:visible" width="16" height="16" viewBox="0 0 16 16"><rect x="0.5" y="1.5" width="6" height="2" fill="#f0f0f0" stroke="#8a8a8a"/><path d="M4.5 4v10.5M4.5 7.5h2M4.5 10.5h2M4.5 14.5h2" stroke="#8a8a8a"/><rect x="6.5" y="6.5" width="7" height="2" fill="#f0f0f0" stroke="#8a8a8a"/><rect x="6.5" y="9.5" width="7" height="2" fill="#f0f0f0" stroke="#8a8a8a"/><rect x="6.5" y="13.5" width="7" height="2" fill="#f0f0f0" stroke="#8a8a8a"/><path d="M8 7l6-6l1.5 1.5l-6 6z" fill="#c0c0c0" stroke="#8a8a8a" stroke-width="0.8"/></svg><svg style="left:1004px;top:31px;overflow:visible" width="16" height="16" viewBox="0 0 16 16"><rect x="0.5" y="1.5" width="6" height="2" fill="#f0f0f0" stroke="#8a8a8a"/><path d="M4.5 4v10.5M4.5 7.5h2M4.5 10.5h2M4.5 14.5h2" stroke="#8a8a8a"/><rect x="6.5" y="6.5" width="7" height="2" fill="#f0f0f0" stroke="#8a8a8a"/><rect x="6.5" y="9.5" width="7" height="2" fill="#f0f0f0" stroke="#8a8a8a"/><rect x="6.5" y="13.5" width="7" height="2" fill="#f0f0f0" stroke="#8a8a8a"/><path d="M11 2l4 4M15 2l-4 4" stroke="#8a8a8a" stroke-width="1"/></svg><svg style="left:1040px;top:31px;overflow:visible" width="16" height="16" viewBox="0 0 16 16"><path d="M4 5.5H16M4 8.5H16M4 11.5H16M4 14.5H16" stroke="#6a7090" stroke-width="1.1"/><path d="M0 4.5h3.5" stroke="#1c3cd8" stroke-width="2"/><path d="M3 1.8l3.5 2.7l-3.5 2.7z" fill="#1c3cd8"/></svg><svg style="left:1063px;top:31px;overflow:visible" width="16" height="16" viewBox="0 0 16 16"><path d="M4.5 5.5H16M4.5 8.5H16M4.5 11.5H16M4.5 14.5H16" stroke="#6a7090" stroke-width="1.1"/><path d="M3 5v4" stroke="#1c3cd8" stroke-width="2"/><path d="M0.2 5.5l2.8-3.5l2.8 3.5z" fill="#1c3cd8"/></svg><svg style="left:1086px;top:31px;overflow:visible" width="16" height="16" viewBox="0 0 16 16"><path d="M4 5.5H16M4 8.5H16M4 11.5H16M4 14.5H16" stroke="#6a7090" stroke-width="1.1"/><path d="M3.5 8.5v3.5" stroke="#1c3cd8" stroke-width="2"/><path d="M0.5 11.5l3 3.5l3-3.5z" fill="#1c3cd8"/></svg><svg style="left:1109px;top:31px;overflow:visible" width="16" height="16" viewBox="0 0 16 16"><path d="M4 5.5H16M4 8.5H16M4 11.5H16M4 14.5H16" stroke="#6a7090" stroke-width="1.1"/><path d="M0 13h3.5" stroke="#1c3cd8" stroke-width="2"/><path d="M3 10.3l3.5 2.7l-3.5 2.7z" fill="#1c3cd8"/></svg><svg style="left:1145px;top:31px;overflow:visible" width="16" height="16" viewBox="0 0 16 16"><path d="M9 1.3A6.3 6.3 0 0 1 5.5 13.8" fill="none" stroke="#8fb0b0" stroke-width="1.5"/><path d="M1 13.6L6.5 8.2" stroke="#c87a30" stroke-width="1.8"/><path d="M5 5l9.2 8.8" stroke="#c87a30" stroke-width="1.5"/><path d="M2 4.6l2.6-2.6l2.8 2.8l-2.6 2.6z" fill="#4a5a60"/></svg><svg style="left:1168px;top:31px;overflow:visible" width="16" height="16" viewBox="0 0 16 16"><path d="M0.3 7h8.7l1.5-1.8v6.6h-10.2z" fill="#2f86ea"/><path d="M0.3 9.5h10v2.3h-10z" fill="#1a66c8"/><path d="M10.2 5.8h2.5l2.8 3.2v2.8h-5.3z" fill="#f3a020"/><path d="M11 6.6h1.7l1.2 1.6h-2.9z" fill="#c8f0ff"/><rect x="0.5" y="11.2" width="15" height="1" fill="#222"/><rect x="0.5" y="14" width="15" height="0.9" fill="#555"/><circle cx="3.4" cy="11.6" r="1.7" fill="#111"/><circle cx="3.4" cy="11.6" r="0.7" fill="#f4f080"/><circle cx="13.4" cy="11.6" r="1.7" fill="#111"/><circle cx="13.4" cy="11.6" r="0.7" fill="#f4f080"/></svg><svg style="left:1191px;top:31px;overflow:visible" width="16" height="16" viewBox="0 0 16 16"><rect x="5.4" y="5.1000000000000005" width="5.2" height="2.6" rx="1.3" fill="#f27814" stroke="#c04c00" stroke-width="0.6"/><rect x="2.6999999999999997" y="7.2" width="5.2" height="2.6" rx="1.3" fill="#f27814" stroke="#c04c00" stroke-width="0.6"/><rect x="8.1" y="7.2" width="5.2" height="2.6" rx="1.3" fill="#f27814" stroke="#c04c00" stroke-width="0.6"/><rect x="0.0" y="9.299999999999999" width="5.2" height="2.6" rx="1.3" fill="#f27814" stroke="#c04c00" stroke-width="0.6"/><rect x="5.4" y="9.299999999999999" width="5.2" height="2.6" rx="1.3" fill="#f27814" stroke="#c04c00" stroke-width="0.6"/><rect x="10.8" y="9.299999999999999" width="5.2" height="2.6" rx="1.3" fill="#f27814" stroke="#c04c00" stroke-width="0.6"/></svg><svg style="left:1220px;top:31px;overflow:visible" width="16" height="16" viewBox="0 0 16 16"><ellipse cx="2.5" cy="6.2" rx="1.8" ry="1" fill="#e86a10" stroke="#b04a00" stroke-width="0.4"/><ellipse cx="5.5" cy="5.8" rx="1.8" ry="1" fill="#e86a10" stroke="#b04a00" stroke-width="0.4"/><ellipse cx="8" cy="5.4" rx="1.8" ry="1" fill="#e86a10" stroke="#b04a00" stroke-width="0.4"/><ellipse cx="4" cy="4.6" rx="1.8" ry="1" fill="#e86a10" stroke="#b04a00" stroke-width="0.4"/><ellipse cx="7" cy="4.2" rx="1.8" ry="1" fill="#e86a10" stroke="#b04a00" stroke-width="0.4"/><path d="M0.3 7h8.7l1.5-1.8v6.6h-10.2z" fill="#2f86ea"/><path d="M0.3 9.5h10v2.3h-10z" fill="#1a66c8"/><path d="M10.2 5.8h2.5l2.8 3.2v2.8h-5.3z" fill="#f3a020"/><path d="M11 6.6h1.7l1.2 1.6h-2.9z" fill="#c8f0ff"/><rect x="0.5" y="11.2" width="15" height="1" fill="#222"/><rect x="0.5" y="14" width="15" height="0.9" fill="#555"/><circle cx="3.4" cy="11.6" r="1.7" fill="#111"/><circle cx="3.4" cy="11.6" r="0.7" fill="#f4f080"/><circle cx="13.4" cy="11.6" r="1.7" fill="#111"/><circle cx="13.4" cy="11.6" r="0.7" fill="#f4f080"/></svg><svg style="left:1256px;top:31px;overflow:visible" width="16" height="16" viewBox="0 0 16 16"><path d="M0.8 9.2l9-2l6 1.2v4.2l-9 2.6l-6-2z" fill="#fff" stroke="#ee3b3b" stroke-width="0.9"/><path d="M6.8 11.2l8.8-2.4M6.8 11.2v4" fill="none" stroke="#ee3b3b" stroke-width="0.9"/><path d="M7.5 12.5l7.5-2M7.5 14l7.5-2" stroke="#c8d4e0" stroke-width="0.7"/><path d="M2.2 5l8.5-2.2l4.2 1v2.8l-8 2.4l-4.7-1.4z" fill="#e552b2"/><path d="M3 6.5l4 1.2v2l-4-1.2z" fill="#fff"/><path d="M7 7.7l8-2.4v1.6l-8 2.4z" fill="#dde6ee"/></svg><svg style="left:1279px;top:31px;overflow:visible" width="16" height="16" viewBox="0 0 16 16"><path d="M0.8 9.2l9-2l6 1.2v4.2l-9 2.6l-6-2z" fill="#fff" stroke="#2ea0e4" stroke-width="0.9"/><path d="M6.8 11.2l8.8-2.4M6.8 11.2v4" fill="none" stroke="#2ea0e4" stroke-width="0.9"/><path d="M7.5 12.5l7.5-2M7.5 14l7.5-2" stroke="#c8d4e0" stroke-width="0.7"/><path d="M2.2 5l8.5-2.2l4.2 1v2.8l-8 2.4l-4.7-1.4z" fill="#2a40d8"/><path d="M3 6.5l4 1.2v2l-4-1.2z" fill="#fff"/><path d="M7 7.7l8-2.4v1.6l-8 2.4z" fill="#dde6ee"/></svg><svg style="left:115px;top:109px;overflow:visible" width="16" height="16" viewBox="0 0 16 16"><path d="M0.5 1.5h6l1.5 2h7.5v11h-15z" fill="#d4d4d4" stroke="#8c8c8c"/><path d="M0.5 3.5h15" stroke="#8c8c8c"/><path d="M5.5 6v5.5h5" fill="none" stroke="#707070" stroke-width="1.3"/><path d="M3.5 7.5l2-2.5l2 2.5z" fill="#707070"/></svg><svg style="left:138px;top:109px;overflow:visible" width="16" height="16" viewBox="0 0 16 16"><path d="M0.5 1.5h6l1.5 2h7.5v11h-15z" fill="#7ee84a" stroke="#8a7a8a"/><path d="M0.5 3.5h15" stroke="#8a7a8a"/><rect x="1" y="4" width="14" height="4" fill="#a8f080"/><rect x="6" y="7.5" width="4" height="1.4" fill="#222"/></svg><svg style="left:167px;top:109px;overflow:visible" width="16" height="16" viewBox="0 0 16 16"><rect x="1" y="5.5" width="5" height="10" fill="#2f7ad6"/><rect x="6" y="3" width="5" height="12.5" fill="#2a72d0"/><rect x="11" y="7" width="5" height="8.5" fill="#2f7ad6"/><rect x="2" y="6.5" width="3" height="8" fill="#c4dcf6"/><rect x="7" y="4" width="3" height="10.5" fill="#c4dcf6"/><rect x="12" y="8" width="3" height="6.5" fill="#c4dcf6"/><path d="M2 8h3M12 8h3M2 10h3M12 10h3M2 12h3M12 12h3M2 14h3M12 14h3M7 5.5h3M7 7.5h3M7 9.5h3M7 11.5h3M7 13.5h3" stroke="#4a8ae0" stroke-width="0.8"/><path d="M6.8 0v3" stroke="#222" stroke-width="0.9"/><path d="M7.2 0h3.8l-1 1l1 1h-3.8z" fill="#e80000"/><rect x="7" y="0.5" width="7" height="7" rx="1" fill="#f07d00"/><circle cx="10.5" cy="4.0" r="1.68" fill="none" stroke="#fff" stroke-width="0.85"/><path d="M10.5 1.1V1.9M10.5 6.1V6.9M7.6 4.0H8.4M12.6 4.0H13.4M8.3 1.8l0.8 0.8M12.7 1.8l-0.8 0.8M8.3 6.2l0.8 -0.8M12.7 6.2l-0.8 -0.8" stroke="#fff" stroke-width="0.6"/></svg><svg style="left:189px;top:109px;overflow:visible" width="16" height="16" viewBox="0 0 16 16"><rect x="0.5" y="1.5" width="6" height="14" fill="#e8e8e8" stroke="#a8a8a8"/><path d="M1 4.5h5M1 6.5h5M1 8.5h5M1 10.5h5M1 12.5h5" stroke="#c8c8c8"/><rect x="9.5" y="7.5" width="6" height="8" fill="#e0e0e0" stroke="#8a8a8a"/><path d="M10 10.5h5M10 12.5h5" stroke="#9a9a9a"/><rect x="8.5" y="0.5" width="7" height="7" rx="1" fill="#8a8a8a"/><circle cx="12.0" cy="4.0" r="1.68" fill="none" stroke="#fff" stroke-width="0.85"/><path d="M12.0 1.1V1.9M12.0 6.1V6.9M9.1 4.0H9.9M14.1 4.0H14.9M9.8 1.8l0.8 0.8M14.2 1.8l-0.8 0.8M9.8 6.2l0.8 -0.8M14.2 6.2l-0.8 -0.8" stroke="#fff" stroke-width="0.6"/></svg><svg style="left:212px;top:109px;overflow:visible" width="16" height="16" viewBox="0 0 16 16"><rect x="4.5" y="3.5" width="6" height="12" fill="#e8e8e8" stroke="#a8a8a8"/><path d="M5 6.5h5M5 8.5h5M5 10.5h5M5 12.5h5" stroke="#c8c8c8"/><rect x="9" y="0.5" width="7" height="7" rx="1" fill="#8a8a8a"/><circle cx="12.5" cy="4.0" r="1.68" fill="none" stroke="#fff" stroke-width="0.85"/><path d="M12.5 1.1V1.9M12.5 6.1V6.9M9.6 4.0H10.4M14.6 4.0H15.4M10.3 1.8l0.8 0.8M14.7 1.8l-0.8 0.8M10.3 6.2l0.8 -0.8M14.7 6.2l-0.8 -0.8" stroke="#fff" stroke-width="0.6"/></svg><svg style="left:235px;top:109px;overflow:visible" width="16" height="16" viewBox="0 0 16 16"><rect x="1.5" y="1.5" width="3" height="14" fill="#e8e8e8" stroke="#7a7a7a"/><path d="M2 4.5h2M2 7.5h2M2 10.5h2M2 13.5h2" stroke="#7a7a7a"/><path d="M4.5 2.5h5" stroke="#7a7a7a"/><circle cx="2" cy="1.5" r="1" fill="#9a6ae0"/><path d="M5 9l5-6" stroke="#9a4ae0" stroke-width="0.9"/><rect x="5" y="8.5" width="11" height="2.5" fill="#f07a10"/><rect x="5" y="11" width="11" height="1" fill="#803010"/><path d="M8 12.5v3M11 12.5v3M14 12.5v3M7 13.5h9M7 15h9" stroke="#2a90ff" stroke-width="1"/><rect x="9" y="0" width="7" height="7" rx="1" fill="#f07d00"/><circle cx="12.5" cy="3.5" r="1.68" fill="none" stroke="#fff" stroke-width="0.85"/><path d="M12.5 0.6V1.4M12.5 5.6V6.4M9.6 3.5H10.4M14.6 3.5H15.4M10.3 1.3l0.8 0.8M14.7 1.3l-0.8 0.8M10.3 5.7l0.8 -0.8M14.7 5.7l-0.8 -0.8" stroke="#fff" stroke-width="0.6"/></svg><svg style="left:258px;top:109px;overflow:visible" width="16" height="16" viewBox="0 0 16 16"><rect x="1.5" y="1.5" width="3" height="14" fill="#e8e8e8" stroke="#7a7a7a"/><path d="M2 4.5h2M2 7.5h2M2 10.5h2M2 13.5h2" stroke="#7a7a7a"/><path d="M4.5 2.5h5" stroke="#7a7a7a"/><circle cx="2" cy="1.5" r="1" fill="#9a6ae0"/><path d="M5 6l4-4" stroke="#9a4ae0" stroke-width="0.9"/><rect x="5" y="5" width="10" height="1.5" fill="#f07a10"/><path d="M13 9v6M15 9v6M12 11h4M12 14h4" stroke="#2a90ff" stroke-width="1"/><rect x="5" y="8" width="8" height="4" rx="1.2" fill="#1e78e6" stroke="#0b4fb0" stroke-width="0.6"/><path d="M13 10h1.2v3h-4.5v2" fill="none" stroke="#333" stroke-width="0.9"/><rect x="8.7" y="14.5" width="2" height="2.5" fill="#e00000"/><rect x="9" y="0" width="7" height="7" rx="1" fill="#f07d00"/><circle cx="12.5" cy="3.5" r="1.68" fill="none" stroke="#fff" stroke-width="0.85"/><path d="M12.5 0.6V1.4M12.5 5.6V6.4M9.6 3.5H10.4M14.6 3.5H15.4M10.3 1.3l0.8 0.8M14.7 1.3l-0.8 0.8M10.3 5.7l0.8 -0.8M14.7 5.7l-0.8 -0.8" stroke="#fff" stroke-width="0.6"/></svg><svg style="left:281px;top:109px;overflow:visible" width="16" height="16" viewBox="0 0 16 16"><path d="M0.5 9l6-7l9 3.5l-6 8z" fill="#3a9a5a"/><path d="M0.5 9l9 4.5l6-8v3l-6 7l-9-4z" fill="#e8ecec" stroke="#b0b8b8" stroke-width="0.6"/><path d="M4 6l6 2.5" stroke="#8ad0a0" stroke-width="0.8"/><rect x="8.5" y="1" width="7" height="7" rx="1" fill="#f07d00"/><circle cx="12.0" cy="4.5" r="1.68" fill="none" stroke="#fff" stroke-width="0.85"/><path d="M12.0 1.6V2.4M12.0 6.6V7.4M9.1 4.5H9.9M14.1 4.5H14.9M9.8 2.3l0.8 0.8M14.2 2.3l-0.8 0.8M9.8 6.7l0.8 -0.8M14.2 6.7l-0.8 -0.8" stroke="#fff" stroke-width="0.6"/></svg><svg style="left:304px;top:109px;overflow:visible" width="16" height="16" viewBox="0 0 16 16"><path d="M0.5 9l6-7l9 3.5l-6 8z" fill="#3a9a5a"/><path d="M0.5 9l9 4.5l6-8v3l-6 7l-9-4z" fill="#e8ecec" stroke="#b0b8b8" stroke-width="0.6"/><path d="M4 6l6 2.5" stroke="#8ad0a0" stroke-width="0.8"/><rect x="4" y="8" width="8" height="4" rx="1.2" fill="#1e78e6" stroke="#0b4fb0" stroke-width="0.6"/><path d="M12 10h1.2v3h-4.5v2" fill="none" stroke="#333" stroke-width="0.9"/><rect x="7.7" y="14.5" width="2" height="2.5" fill="#e00000"/><rect x="8.5" y="1" width="7" height="7" rx="1" fill="#f07d00"/><circle cx="12.0" cy="4.5" r="1.68" fill="none" stroke="#fff" stroke-width="0.85"/><path d="M12.0 1.6V2.4M12.0 6.6V7.4M9.1 4.5H9.9M14.1 4.5H14.9M9.8 2.3l0.8 0.8M14.2 2.3l-0.8 0.8M9.8 6.7l0.8 -0.8M14.2 6.7l-0.8 -0.8" stroke="#fff" stroke-width="0.6"/></svg><svg style="left:334px;top:109px;overflow:visible" width="16" height="16" viewBox="0 0 16 16"><path d="M1 8l6-6l6 6" fill="none" stroke="#7a5a3a" stroke-width="1.1"/><path d="M2.5 7.5v7h9v-7l-4.5-4.5z" fill="#fff" stroke="#8a8a8a" stroke-width="0.9"/><rect x="3" y="1" width="1.6" height="4" fill="#c89040"/><path d="M1 15h13" stroke="#6a6a6a"/><rect x="4" y="9" width="2" height="6" fill="#f0a030"/><rect x="8.5" y="9" width="2.5" height="3" fill="#3a8ae8"/><rect x="8.5" y="1" width="7" height="7" rx="1" fill="#f07d00"/><circle cx="12.0" cy="4.5" r="1.68" fill="none" stroke="#fff" stroke-width="0.85"/><path d="M12.0 1.6V2.4M12.0 6.6V7.4M9.1 4.5H9.9M14.1 4.5H14.9M9.8 2.3l0.8 0.8M14.2 2.3l-0.8 0.8M9.8 6.7l0.8 -0.8M14.2 6.7l-0.8 -0.8" stroke="#fff" stroke-width="0.6"/></svg><svg style="left:357px;top:109px;overflow:visible" width="16" height="16" viewBox="0 0 16 16"><path d="M1 8l6-6l6 6" fill="none" stroke="#7a5a3a" stroke-width="1.1"/><path d="M2.5 7.5v7h9v-7l-4.5-4.5z" fill="#fff" stroke="#8a8a8a" stroke-width="0.9"/><rect x="3" y="1" width="1.6" height="4" fill="#c89040"/><path d="M1 15h13" stroke="#6a6a6a"/><rect x="3.5" y="8.5" width="8" height="4" rx="1.2" fill="#1e78e6" stroke="#0b4fb0" stroke-width="0.6"/><path d="M11.5 10.5h1.2v3h-4.5v2" fill="none" stroke="#333" stroke-width="0.9"/><rect x="7.2" y="15.0" width="2" height="2.5" fill="#e00000"/><rect x="8.5" y="1" width="7" height="7" rx="1" fill="#f07d00"/><circle cx="12.0" cy="4.5" r="1.68" fill="none" stroke="#fff" stroke-width="0.85"/><path d="M12.0 1.6V2.4M12.0 6.6V7.4M9.1 4.5H9.9M14.1 4.5H14.9M9.8 2.3l0.8 0.8M14.2 2.3l-0.8 0.8M9.8 6.7l0.8 -0.8M14.2 6.7l-0.8 -0.8" stroke="#fff" stroke-width="0.6"/></svg><svg style="left:385px;top:109px;overflow:visible" width="16" height="16" viewBox="0 0 16 16"><rect x="0.5" y="1.5" width="15" height="13" fill="#fff" stroke="#909090"/><rect x="0" y="0.5" width="7" height="7" rx="1" fill="#8a8a8a"/><circle cx="3.5" cy="4.0" r="1.68" fill="none" stroke="#fff" stroke-width="0.85"/><path d="M3.5 1.1V1.9M3.5 6.1V6.9M0.6 4.0H1.4M5.6 4.0H6.4M1.3 1.8l0.8 0.8M5.7 1.8l-0.8 0.8M1.3 6.2l0.8 -0.8M5.7 6.2l-0.8 -0.8" stroke="#fff" stroke-width="0.6"/><text x="9.5" y="13" font-size="8" fill="#000" text-anchor="middle" font-family="Liberation Sans">P</text></svg><svg style="left:408px;top:109px;overflow:visible" width="16" height="16" viewBox="0 0 16 16"><rect x="0.5" y="1.5" width="15" height="13" fill="#fff" stroke="#909090"/><rect x="0" y="0.5" width="7" height="7" rx="1" fill="#8a8a8a"/><circle cx="3.5" cy="4.0" r="1.68" fill="none" stroke="#fff" stroke-width="0.85"/><path d="M3.5 1.1V1.9M3.5 6.1V6.9M0.6 4.0H1.4M5.6 4.0H6.4M1.3 1.8l0.8 0.8M5.7 1.8l-0.8 0.8M1.3 6.2l0.8 -0.8M5.7 6.2l-0.8 -0.8" stroke="#fff" stroke-width="0.6"/><text x="8.7" y="13" font-size="7.2" fill="#000" text-anchor="middle" font-family="Liberation Sans">ПР</text></svg><svg style="left:431px;top:109px;overflow:visible" width="16" height="16" viewBox="0 0 16 16"><path d="M8 2l5 5h-3v6.5h-4v-6.5h-3z" fill="#9a9a9a"/></svg><svg style="left:454px;top:109px;overflow:visible" width="16" height="16" viewBox="0 0 16 16"><path d="M8 14l5-5h-3v-6.5h-4v6.5h-3z" fill="#9a9a9a"/></svg><svg style="left:483px;top:109px;overflow:visible" width="16" height="16" viewBox="0 0 16 16"><path d="M3 7l5-5.5l5 5.5" fill="none" stroke="#8a3a1a" stroke-width="1.1"/><path d="M4.5 6.5v4h7v-4l-3.5-4z" fill="#fff"/><rect x="9" y="6" width="2" height="2" fill="#7ab0f0"/><path d="M0 11l3.5-3.5l3.5 3.5M9 11l3.5-3.5l3.5 3.5" fill="none" stroke="#8a3a1a" stroke-width="1.1"/><path d="M1 10.5v5h5v-5l-2.5-2.5zM10 10.5v5h5v-5l-2.5-2.5z" fill="#fff" stroke="#9a9a9a" stroke-width="0.8"/><rect x="3" y="12" width="1.3" height="3.5" fill="#d09040"/><rect x="12" y="12" width="1.3" height="3.5" fill="#d09040"/></svg><svg style="left:506px;top:109px;overflow:visible" width="16" height="16" viewBox="0 0 16 16"><rect x="3.5" y="1.5" width="12" height="11" fill="#4ab8a0" stroke="#2a8878"/><rect x="0.5" y="3.5" width="13" height="12" fill="#38b098" stroke="#287868"/><text x="7" y="9.5" font-size="6" font-weight="bold" fill="#fff" text-anchor="middle" font-family="Liberation Sans">0|</text><text x="8" y="14.5" font-size="6" font-weight="bold" fill="#fff" text-anchor="middle" font-family="Liberation Sans">|0</text><rect x="9" y="0" width="7" height="7" rx="1" fill="#f07d00"/><circle cx="12.5" cy="3.5" r="1.68" fill="none" stroke="#fff" stroke-width="0.85"/><path d="M12.5 0.6V1.4M12.5 5.6V6.4M9.6 3.5H10.4M14.6 3.5H15.4M10.3 1.3l0.8 0.8M14.7 1.3l-0.8 0.8M10.3 5.7l0.8 -0.8M14.7 5.7l-0.8 -0.8" stroke="#fff" stroke-width="0.6"/></svg><svg style="left:535px;top:109px;overflow:visible" width="16" height="16" viewBox="0 0 16 16"><rect x="0.5" y="2.5" width="15" height="13" fill="#e4f6f2" stroke="#909090"/><text x="3.5" y="9" font-size="6.5" fill="#000" font-family="Liberation Mono" font-weight="bold">0</text><path d="M6 14l3-7" stroke="#000" stroke-width="1"/><text x="9" y="14.5" font-size="6.5" fill="#000" font-family="Liberation Mono" font-weight="bold">0</text><rect x="9" y="0" width="7" height="7" rx="1" fill="#f07d00"/><circle cx="12.5" cy="3.5" r="1.68" fill="none" stroke="#fff" stroke-width="0.85"/><path d="M12.5 0.6V1.4M12.5 5.6V6.4M9.6 3.5H10.4M14.6 3.5H15.4M10.3 1.3l0.8 0.8M14.7 1.3l-0.8 0.8M10.3 5.7l0.8 -0.8M14.7 5.7l-0.8 -0.8" stroke="#fff" stroke-width="0.6"/></svg><svg style="left:558px;top:109px;overflow:visible" width="16" height="16" viewBox="0 0 16 16"><rect x="0.5" y="2.5" width="15" height="13" fill="#c4c4c4" stroke="#909090"/><text x="7.5" y="13" font-size="6.5" fill="#555" text-anchor="middle" font-family="Liberation Mono" font-weight="bold">M29</text><rect x="9" y="0" width="7" height="7" rx="1" fill="#8a8a8a"/><circle cx="12.5" cy="3.5" r="1.68" fill="none" stroke="#fff" stroke-width="0.85"/><path d="M12.5 0.6V1.4M12.5 5.6V6.4M9.6 3.5H10.4M14.6 3.5H15.4M10.3 1.3l0.8 0.8M14.7 1.3l-0.8 0.8M10.3 5.7l0.8 -0.8M14.7 5.7l-0.8 -0.8" stroke="#fff" stroke-width="0.6"/></svg><svg style="left:581px;top:109px;overflow:visible" width="16" height="16" viewBox="0 0 16 16"><rect x="0.5" y="2.5" width="15" height="13" fill="#c4c4c4" stroke="#909090"/><text x="7.5" y="13" font-size="7.5" fill="#555" text-anchor="middle" font-family="Liberation Mono" font-weight="bold">PP</text><rect x="9" y="0" width="7" height="7" rx="1" fill="#8a8a8a"/><circle cx="12.5" cy="3.5" r="1.68" fill="none" stroke="#fff" stroke-width="0.85"/><path d="M12.5 0.6V1.4M12.5 5.6V6.4M9.6 3.5H10.4M14.6 3.5H15.4M10.3 1.3l0.8 0.8M14.7 1.3l-0.8 0.8M10.3 5.7l0.8 -0.8M14.7 5.7l-0.8 -0.8" stroke="#fff" stroke-width="0.6"/></svg><svg style="left:604px;top:109px;overflow:visible" width="16" height="16" viewBox="0 0 16 16"><rect x="0.5" y="2.5" width="15" height="13" fill="#c4c4c4" stroke="#909090"/><text x="7.5" y="13" font-size="7.5" fill="#555" text-anchor="middle" font-family="Liberation Mono" font-weight="bold">Ф3</text><rect x="9" y="0" width="7" height="7" rx="1" fill="#8a8a8a"/><circle cx="12.5" cy="3.5" r="1.68" fill="none" stroke="#fff" stroke-width="0.85"/><path d="M12.5 0.6V1.4M12.5 5.6V6.4M9.6 3.5H10.4M14.6 3.5H15.4M10.3 1.3l0.8 0.8M14.7 1.3l-0.8 0.8M10.3 5.7l0.8 -0.8M14.7 5.7l-0.8 -0.8" stroke="#fff" stroke-width="0.6"/></svg><svg style="left:633px;top:109px;overflow:visible" width="16" height="16" viewBox="0 0 16 16"><path d="M0.5 1.5h6l1.5 2h7.5v11h-15z" fill="#c0c0c0" stroke="#9a9a9a"/><path d="M0.5 3.5h15" stroke="#9a9a9a"/><rect x="9" y="0" width="7" height="7" rx="1" fill="#8a8a8a"/><circle cx="12.5" cy="3.5" r="1.68" fill="none" stroke="#fff" stroke-width="0.85"/><path d="M12.5 0.6V1.4M12.5 5.6V6.4M9.6 3.5H10.4M14.6 3.5H15.4M10.3 1.3l0.8 0.8M14.7 1.3l-0.8 0.8M10.3 5.7l0.8 -0.8M14.7 5.7l-0.8 -0.8" stroke="#fff" stroke-width="0.6"/></svg><svg style="left:662px;top:109px;overflow:visible" width="16" height="16" viewBox="0 0 16 16"><path d="M3.5 3L13 13.5M13 3L3.5 13.5" stroke="#f04a28" stroke-width="1.8"/></svg><svg style="left:520px;top:176px;overflow:visible" width="16" height="16" viewBox="0 0 16 16"><path d="M0.5 0.5h5l1 1h9v13h-15z" fill="#c8c8d0" stroke="#9a9aa8"/><rect x="1.5" y="1" width="4" height="1.2" fill="#f0c020"/><defs><linearGradient id="fg" x1="0" y1="1" x2="1" y2="0"><stop offset="0.35" stop-color="#ffff00"/><stop offset="1" stop-color="#ff8000"/></linearGradient></defs><rect x="1" y="3" width="14" height="11" fill="url(#fg)"/></svg><svg style="left:520px;top:193px;overflow:visible" width="16" height="16" viewBox="0 0 16 16"><rect x="1" y="5.5" width="5" height="10" fill="#2f7ad6"/><rect x="6" y="3" width="5" height="12.5" fill="#2a72d0"/><rect x="11" y="7" width="5" height="8.5" fill="#2f7ad6"/><rect x="2" y="6.5" width="3" height="8" fill="#c4dcf6"/><rect x="7" y="4" width="3" height="10.5" fill="#c4dcf6"/><rect x="12" y="8" width="3" height="6.5" fill="#c4dcf6"/><path d="M2 8h3M12 8h3M2 10h3M12 10h3M2 12h3M12 12h3M2 14h3M12 14h3M7 5.5h3M7 7.5h3M7 9.5h3M7 11.5h3M7 13.5h3" stroke="#4a8ae0" stroke-width="0.8"/><path d="M6.8 0v3" stroke="#222" stroke-width="0.9"/><path d="M7.2 0h3.8l-1 1l1 1h-3.8z" fill="#e80000"/></svg><svg style="left:520px;top:210px;overflow:visible" width="16" height="16" viewBox="0 0 16 16"><defs><linearGradient id="ex" x1="0" y1="0" x2="0" y2="1"><stop offset="0" stop-color="#fff7b0"/><stop offset="1" stop-color="#f2d040"/></linearGradient><linearGradient id="hd" x1="0" y1="0" x2="0" y2="1"><stop offset="0" stop-color="#f8c080"/><stop offset="1" stop-color="#d87020"/></linearGradient></defs><path d="M3.5 1.5h4l1 1h5.5v9h-10.5z" fill="url(#ex)" stroke="#a8a090" stroke-width="0.8"/><rect x="4" y="1.8" width="3.5" height="1.2" fill="#f0c020"/><path d="M0.5 7.5c2 0.5 3 2.5 6 2.5c2.5 0 5-1.5 7.5-1.5l0.5 2.5c-2 1.5-4.5 4-8 4c-3 0-4.5-2-6-4.5z" fill="url(#hd)" stroke="#b86018" stroke-width="0.5"/><path d="M5 11.5c1.5 0.5 3 0.5 5 0" stroke="#a85010" stroke-width="0.7" fill="none"/><path d="M15.2 8v7" stroke="#222" stroke-width="1.2"/></svg><svg style="left:520px;top:227px;overflow:visible" width="16" height="16" viewBox="0 0 16 16"><ellipse cx="8" cy="3.5" rx="3.2" ry="3" fill="#e4f0f8" stroke="#9ab0c4" stroke-width="0.7"/><rect x="4" y="6" width="8" height="10" fill="#4e5d70"/><rect x="5" y="7" width="1" height="1" fill="#d8e0ea"/><rect x="5" y="9" width="1" height="1" fill="#d8e0ea"/><rect x="5" y="11" width="1" height="1" fill="#d8e0ea"/><rect x="5" y="13" width="1" height="1" fill="#d8e0ea"/><rect x="7" y="7" width="1" height="1" fill="#d8e0ea"/><rect x="7" y="9" width="1" height="1" fill="#d8e0ea"/><rect x="7" y="11" width="1" height="1" fill="#d8e0ea"/><rect x="7" y="13" width="1" height="1" fill="#d8e0ea"/><rect x="9" y="7" width="1" height="1" fill="#d8e0ea"/><rect x="9" y="9" width="1" height="1" fill="#d8e0ea"/><rect x="9" y="11" width="1" height="1" fill="#d8e0ea"/><rect x="9" y="13" width="1" height="1" fill="#d8e0ea"/><rect x="6" y="8" width="1" height="1" fill="#aab8c8"/><rect x="6" y="10" width="1" height="1" fill="#aab8c8"/><rect x="6" y="12" width="1" height="1" fill="#aab8c8"/><rect x="6" y="14" width="1" height="1" fill="#aab8c8"/><rect x="8" y="8" width="1" height="1" fill="#aab8c8"/><rect x="8" y="10" width="1" height="1" fill="#aab8c8"/><rect x="8" y="12" width="1" height="1" fill="#aab8c8"/><rect x="8" y="14" width="1" height="1" fill="#aab8c8"/><rect x="10" y="8" width="1" height="1" fill="#aab8c8"/><rect x="10" y="10" width="1" height="1" fill="#aab8c8"/><rect x="10" y="12" width="1" height="1" fill="#aab8c8"/><rect x="10" y="14" width="1" height="1" fill="#aab8c8"/><path d="M2 9.5h12" stroke="#3a4858" stroke-width="1"/><rect x="3" y="15" width="10" height="1" fill="#3a4858"/></svg><svg style="left:24px;top:157px;overflow:visible" width="16" height="16" viewBox="0 0 16 16"><path d="M6 0.5l-5 11.5h9.5z" fill="#2f74d4" stroke="#1e5ab0" stroke-width="0.6"/><rect x="9.5" y="6" width="7" height="6.5" fill="#6cc040" stroke="#4a9a28" stroke-width="0.6"/><defs><radialGradient id="rb" cx="0.4" cy="0.3" r="0.7"><stop offset="0" stop-color="#ffb0a0"/><stop offset="0.35" stop-color="#f03a1a"/><stop offset="1" stop-color="#c01800"/></radialGradient></defs><circle cx="8" cy="9" r="3.9" fill="url(#rb)"/></svg><svg style="left:44px;top:173px;overflow:visible" width="16" height="16" viewBox="0 0 16 16"><path d="M0.5 0.5h5l1 1h9v13h-15z" fill="#c8c8d0" stroke="#9a9aa8"/><rect x="1.5" y="1" width="4" height="1.2" fill="#f0c020"/><defs><linearGradient id="fg" x1="0" y1="1" x2="1" y2="0"><stop offset="0.35" stop-color="#ffff00"/><stop offset="1" stop-color="#ff8000"/></linearGradient></defs><rect x="1" y="3" width="14" height="11" fill="url(#fg)"/></svg><svg style="left:44px;top:189px;overflow:visible" width="16" height="16" viewBox="0 0 16 16"><rect x="1" y="5.5" width="5" height="10" fill="#2f7ad6"/><rect x="6" y="3" width="5" height="12.5" fill="#2a72d0"/><rect x="11" y="7" width="5" height="8.5" fill="#2f7ad6"/><rect x="2" y="6.5" width="3" height="8" fill="#c4dcf6"/><rect x="7" y="4" width="3" height="10.5" fill="#c4dcf6"/><rect x="12" y="8" width="3" height="6.5" fill="#c4dcf6"/><path d="M2 8h3M12 8h3M2 10h3M12 10h3M2 12h3M12 12h3M2 14h3M12 14h3M7 5.5h3M7 7.5h3M7 9.5h3M7 11.5h3M7 13.5h3" stroke="#4a8ae0" stroke-width="0.8"/><path d="M6.8 0v3" stroke="#222" stroke-width="0.9"/><path d="M7.2 0h3.8l-1 1l1 1h-3.8z" fill="#e80000"/></svg><svg style="left:44px;top:205px;overflow:visible" width="16" height="16" viewBox="0 0 16 16"><defs><linearGradient id="ex" x1="0" y1="0" x2="0" y2="1"><stop offset="0" stop-color="#fff7b0"/><stop offset="1" stop-color="#f2d040"/></linearGradient><linearGradient id="hd" x1="0" y1="0" x2="0" y2="1"><stop offset="0" stop-color="#f8c080"/><stop offset="1" stop-color="#d87020"/></linearGradient></defs><path d="M3.5 1.5h4l1 1h5.5v9h-10.5z" fill="url(#ex)" stroke="#a8a090" stroke-width="0.8"/><rect x="4" y="1.8" width="3.5" height="1.2" fill="#f0c020"/><path d="M0.5 7.5c2 0.5 3 2.5 6 2.5c2.5 0 5-1.5 7.5-1.5l0.5 2.5c-2 1.5-4.5 4-8 4c-3 0-4.5-2-6-4.5z" fill="url(#hd)" stroke="#b86018" stroke-width="0.5"/><path d="M5 11.5c1.5 0.5 3 0.5 5 0" stroke="#a85010" stroke-width="0.7" fill="none"/><path d="M15.2 8v7" stroke="#222" stroke-width="1.2"/></svg><svg style="left:44px;top:221px;overflow:visible" width="16" height="16" viewBox="0 0 16 16"><ellipse cx="8" cy="3.5" rx="3.2" ry="3" fill="#e4f0f8" stroke="#9ab0c4" stroke-width="0.7"/><rect x="4" y="6" width="8" height="10" fill="#4e5d70"/><rect x="5" y="7" width="1" height="1" fill="#d8e0ea"/><rect x="5" y="9" width="1" height="1" fill="#d8e0ea"/><rect x="5" y="11" width="1" height="1" fill="#d8e0ea"/><rect x="5" y="13" width="1" height="1" fill="#d8e0ea"/><rect x="7" y="7" width="1" height="1" fill="#d8e0ea"/><rect x="7" y="9" width="1" height="1" fill="#d8e0ea"/><rect x="7" y="11" width="1" height="1" fill="#d8e0ea"/><rect x="7" y="13" width="1" height="1" fill="#d8e0ea"/><rect x="9" y="7" width="1" height="1" fill="#d8e0ea"/><rect x="9" y="9" width="1" height="1" fill="#d8e0ea"/><rect x="9" y="11" width="1" height="1" fill="#d8e0ea"/><rect x="9" y="13" width="1" height="1" fill="#d8e0ea"/><rect x="6" y="8" width="1" height="1" fill="#aab8c8"/><rect x="6" y="10" width="1" height="1" fill="#aab8c8"/><rect x="6" y="12" width="1" height="1" fill="#aab8c8"/><rect x="6" y="14" width="1" height="1" fill="#aab8c8"/><rect x="8" y="8" width="1" height="1" fill="#aab8c8"/><rect x="8" y="10" width="1" height="1" fill="#aab8c8"/><rect x="8" y="12" width="1" height="1" fill="#aab8c8"/><rect x="8" y="14" width="1" height="1" fill="#aab8c8"/><rect x="10" y="8" width="1" height="1" fill="#aab8c8"/><rect x="10" y="10" width="1" height="1" fill="#aab8c8"/><rect x="10" y="12" width="1" height="1" fill="#aab8c8"/><rect x="10" y="14" width="1" height="1" fill="#aab8c8"/><path d="M2 9.5h12" stroke="#3a4858" stroke-width="1"/><rect x="3" y="15" width="10" height="1" fill="#3a4858"/></svg></body></html>
